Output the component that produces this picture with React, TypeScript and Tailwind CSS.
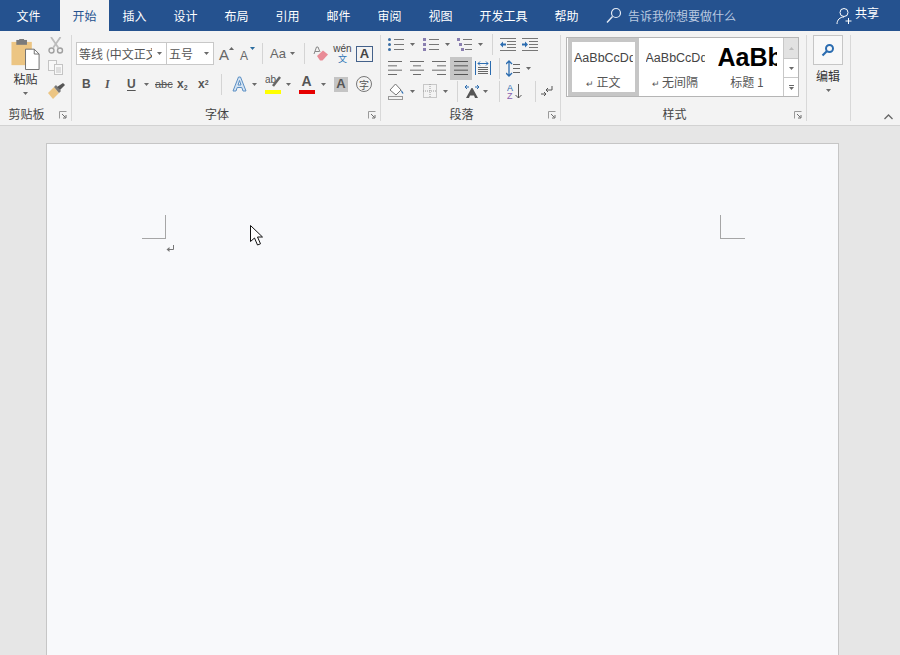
import React from "react";

const Caret = ({ className = "" }: { className?: string }) => (
  <svg width="5" height="3" viewBox="0 0 5 3" className={`shrink-0 ${className}`}><polygon points="0,0 5,0 2.5,3" fill="#6a6a6a" /></svg>
);
const Sep = ({ className = "" }: { className?: string }) => <div className={`w-px h-[21px] bg-[#d4d4d4] shrink-0 ${className}`} />;
const Launcher = () => (
  <svg width="8" height="8" viewBox="0 0 8 8" className="absolute right-[4px] top-[4px]">
    <path d="M.5 7.5V.5H7.5" fill="none" stroke="#9a9a9a" />
    <path d="M3 3 6.5 6.5M7 4v3H4" fill="none" stroke="#6d6d6d" />
  </svg>
);
const Lines = ({ w = 14, rows, color = "#6c6c6c" }: { w?: number; rows: [number, number][]; color?: string }) => (
  <svg width={w} height="14" viewBox={`0 0 ${w} 14`} className="shrink-0">
    {rows.map(([a, b], i) => <rect key={i} x={a} y={i * (13 / (rows.length - 1)) } width={b - a} height="1" fill={color} />)}
  </svg>
);
const Group = ({ w, label, launcher = true, children }: { w: string; label?: string; launcher?: boolean; children: React.ReactNode }) => (
  <div className={`${w} shrink-0 h-[94px] flex flex-col relative`}>
    <div className="flex-1 min-h-0">{children}</div>
    <div className="h-[14px] mb-[4px] relative flex justify-center items-center pr-[18px] text-[12px] leading-[14px] text-[#444]">
      {label}
      {launcher && <Launcher />}
    </div>
  </div>
);
const VLine = () => <div className="w-px h-[86px] mt-[4px] bg-[#d8d8d8] shrink-0" />;

const tabs: [string, string][] = [["插入", "w-[51px]"], ["设计", "w-[51px]"], ["布局", "w-[51px]"], ["引用", "w-[51px]"], ["邮件", "w-[51px]"], ["审阅", "w-[51px]"], ["视图", "w-[51px]"], ["开发工具", "w-[75px]"], ["帮助", "w-[51px]"]];

function ClipboardGroup() {
  return (
    <div className="flex h-full">
      <div className="w-[48px] flex flex-col items-center pl-[3px]">
        <svg width="30" height="31" viewBox="0 0 30 32" className="mt-[8px] shrink-0">
          <rect x="0" y="3" width="21" height="24" fill="#ecc583" />
          <rect x="5" y="1" width="11" height="5" fill="#7b7b7b" />
          <rect x="8" y="0" width="5" height="3" fill="#7b7b7b" />
          <path d="M14.500 10.500h9l5 5v16h-14z" fill="#fff" stroke="#6f6f6f" />
          <path d="M23.500 10.500v5h5" fill="none" stroke="#6f6f6f" />
        </svg>
        <div className="text-[12px] leading-[14px] text-[#333] mt-[2px]">粘贴</div>
        <Caret className="mt-[6px]" />
      </div>
      <div className="flex flex-col pt-[6px]">
        <svg width="16" height="17" viewBox="0 0 16 17" className="shrink-0"><circle cx="3.500" cy="13.500" r="2.500" fill="none" stroke="#a0a0a0" strokeWidth="1.400" /><circle cx="12" cy="13.500" r="2.500" fill="none" stroke="#a0a0a0" strokeWidth="1.400" /><path d="M3 0 10.500 11M12.500 0 5 11" stroke="#bcbcbc" strokeWidth="1.800" /></svg>
        <svg width="16" height="16" viewBox="0 0 16 16" className="mt-[6px] shrink-0" fill="#f8f8f8" stroke="#c4c4c4"><rect x=".5" y=".5" width="8" height="10" /><rect x="6.500" y="4.500" width="8" height="10" /><path d="M8 8h5M8 10h5M8 12h5" /></svg>
        <svg width="18" height="16" viewBox="0 0 18 16" className="mt-[7px] shrink-0"><path d="M0 10 6 4 11 10 5 16Z" fill="#ecc583" /><path d="M6 4 8 2 13 8 11 10Z" fill="#777" /><path d="M9 4 15 0 17 2 12 7Z" fill="#555" /></svg>
      </div>
    </div>
  );
}

function FontGroup() {
  return (
    <div className="pl-[4px]">
      <div className="flex items-center pt-[11px] h-[34px]">
        <div className="w-[91px] h-[23px] border border-[#c8c8c8] bg-white flex items-center pl-[2px] pr-[4px] overflow-hidden">
          <span className="text-[12px] text-[#555] whitespace-nowrap overflow-hidden w-[73px]">等线 (中文正文)</span>
          <Caret className="ml-auto" />
        </div>
        <div className="w-[47px] h-[23px] border border-l-0 border-[#c8c8c8] bg-white flex items-center pl-[2px] pr-[4px]">
          <span className="text-[12px] text-[#555]">五号</span>
          <Caret className="ml-auto" />
        </div>
        <div className="ml-[5px] flex items-start w-[15px] h-[18px] relative">
          <span className="text-[15px] leading-[20px] text-[#666] font-['Liberation_Sans',sans-serif]">A</span>
          <svg width="5" height="3" viewBox="0 0 5 3" className="absolute right-0 top-[2px]"><polygon points="0,3 5,3 2.500,0" fill="#666" /></svg>
        </div>
        <div className="ml-[6px] flex items-start w-[15px] h-[18px] relative">
          <span className="text-[12px] leading-[22px] text-[#666] font-['Liberation_Sans',sans-serif]">A</span>
          <svg width="5" height="3" viewBox="0 0 5 3" className="absolute right-0 top-[2px]"><polygon points="0,0 5,0 2.500,3" fill="#2b6c9e" /></svg>
        </div>
        <Sep className="ml-[7px]" />
        <span className="ml-[7px] text-[13px] leading-[16px] text-[#666] font-['Liberation_Sans',sans-serif] w-[17px]">Aa</span>
        <Caret className="ml-[3px]" />
        <Sep className="ml-[9px]" />
        <svg width="16" height="16" viewBox="0 0 16 16" className="ml-[8px] shrink-0"><path d="M1 8 3.500 1h1.500l2 5M2 5.500h4" fill="none" stroke="#888" /><path d="M4 10 10 4.500 15 8.500 9.500 14.500H7Z" fill="#e98b96" /></svg>
        <div className="ml-[5px] w-[17px] flex flex-col items-center leading-none">
          <span className="text-[10px] leading-[10px] text-[#444] font-['Liberation_Sans',sans-serif]">wén</span>
          <span className="text-[9px] leading-[9px] text-[#2f75b5]">文</span>
        </div>
        <div className="ml-[5px] w-[17px] h-[16px] border border-[#44618a] flex items-center justify-center text-[13px] font-bold text-[#444] leading-none font-['Liberation_Sans',sans-serif]">A</div>
      </div>
      <div className="flex items-center h-[24px] mt-[7px] text-[#555] font-['Liberation_Sans',sans-serif]">
        <span className="ml-[6px] w-[8px] text-[12px] font-bold">B</span>
        <span className="ml-[15px] w-[6px] text-[12px] font-bold italic font-['Liberation_Serif',serif]">I</span>
        <span className="ml-[16px] w-[9px] text-[12px] font-bold underline underline-offset-2">U</span>
        <Caret className="ml-[8px]" />
        <span className="ml-[6px] w-[17px] text-[11px] line-through">abc</span>
        <span className="ml-[5px] w-[13px] text-[12px] font-bold">x<sub className="text-[7px]">2</sub></span>
        <span className="ml-[8px] w-[15px] text-[12px] font-bold">x<sup className="text-[7px]">2</sup></span>
        <Sep className="ml-[8px]" />
        <span className="ml-[10px] shrink-0 w-[14px]"><svg width="15" height="16" viewBox="0 0 15 16"><path d="M1 15 6.500 1h2L14 15h-3l-1.200-3.500h-4.600L4 15ZM6 9h3L7.500 4.500Z" fill="#d5e4f3" stroke="#5b8fc4" /></svg></span>
        <Caret className="ml-[6px]" />
        <div className="ml-[7px] w-[17px] h-[20px] flex flex-col justify-between items-center shrink-0">
          <svg width="16" height="13" viewBox="0 0 16 13"><text x="0" y="9" fontSize="10" fill="#555" fontFamily="Liberation Sans">ab</text><path d="M8 12 15 3" stroke="#666" strokeWidth="2.500" /></svg>
          <div className="w-[16px] h-[4px] bg-[#ffff00]" />
        </div>
        <Caret className="ml-[5px]" />
        <div className="ml-[7px] w-[17px] h-[20px] flex flex-col justify-between items-center shrink-0">
          <span className="text-[14px] leading-[15px] font-bold text-[#555]">A</span>
          <div className="w-[16px] h-[4px] bg-[#e60000]" />
        </div>
        <Caret className="ml-[6px]" />
        <div className="ml-[8px] w-[14px] h-[15px] bg-[#c4c4c4] flex items-center justify-center text-[13px] font-bold text-[#555]">A</div>
        <div className="ml-[8px] w-[16px] h-[16px] rounded-full border border-[#777] flex items-center justify-center text-[10px] text-[#555] font-['Noto_Sans_CJK_SC',sans-serif]">字</div>
      </div>
    </div>
  );
}

const Bullets = ({ kind }: { kind: 0 | 1 | 2 }) => (
  <svg width="16" height="14" viewBox="0 0 16 14" className="shrink-0">
    {[1, 6, 11].map((y, i) => (
      <g key={y}>
        {kind === 0 && <circle cx="1.500" cy={y + 1.5} r="1.500" fill="#3a6ea5" />}
        {kind === 1 && <rect x="0" y={y} width="3" height="3" fill="#8a7fb0" />}
        {kind === 2 && <rect x={i * 2} y={y} width="3" height="3" fill="#8a7fb0" />}
        <rect x={kind === 2 ? 6 + i : 6} y={y + 1} width={kind === 2 ? 9 - i : 10} height="1" fill="#777" />
      </g>
    ))}
  </svg>
);
const Indent = ({ dir }: { dir: 0 | 1 }) => (
  <svg width="16" height="13" viewBox="0 0 16 13" className="shrink-0">
    <path d="M0 .5h16M7 3.500h9M7 6.500h9M7 9.500h9M0 12.500h16" stroke="#777" />
    {dir === 0 ? <path d="M0 6.500 3 3.500v2h3v2H3v2Z" fill="#2b6cb0" /> : <path d="M6 6.500 3 3.500v2H0v2h3v2Z" fill="#2b6cb0" />}
  </svg>
);

function ParagraphGroup() {
  return (
    <div className="pl-[7px]">
      <div className="flex items-center pt-[6px] h-[20px]">
        <Bullets kind={0} /><Caret className="ml-[6px]" />
        <div className="ml-[8px]"><Bullets kind={1} /></div><Caret className="ml-[6px]" />
        <div className="ml-[7px]"><Bullets kind={2} /></div><Caret className="ml-[5px]" />
        <Sep className="ml-[9px]" />
        <div className="ml-[7px]"><Indent dir={0} /></div>
        <div className="ml-[6px]"><Indent dir={1} /></div>
      </div>
      <div className="flex items-center h-[24px] mt-[5px]">
        <Lines rows={[[0, 14], [0, 9], [0, 14], [0, 9]]} />
        <div className="ml-[8px]"><Lines rows={[[0, 14], [3, 11], [0, 14], [3, 11]]} /></div>
        <div className="ml-[8px]"><Lines rows={[[0, 14], [5, 14], [0, 14], [5, 14]]} /></div>
        <div className="ml-[4px] w-[22px] h-[23px] bg-[#c6c6c6] flex items-center justify-center">
          <Lines rows={[[0, 14], [0, 14], [0, 14], [0, 14]]} color="#555" />
        </div>
        <svg width="16" height="16" viewBox="0 0 16 16" className="ml-[3px] shrink-0"><path d="M.5 1v14M15.500 1v14" stroke="#2b6cb0" /><path d="M3 3.500h10M5 1.500 3 3.500l2 2M11 1.500l2 2-2 2" fill="none" stroke="#2b6cb0" /><path d="M3 7.500h10M3 9.500h10M3 11.500h10M3 13.500h10" stroke="#666" /></svg>
        <Sep className="ml-[8px]" />
        <svg width="14" height="17" viewBox="0 0 14 17" className="ml-[6px] shrink-0"><path d="M3 1v15M0 4l3-3 3 3M0 13l3 3 3-3" fill="none" stroke="#2b6cb0" strokeWidth="1.300" /><path d="M7 4.500h7M7 8.500h7M7 12.500h7" stroke="#666" /></svg>
        <Caret className="ml-[6px]" />
      </div>
      <div className="flex items-center h-[22px]">
        <svg width="17" height="17" viewBox="0 0 17 17" className="shrink-0"><path d="M2 7 7.500 1 13 7 8 12Z" fill="#fff" stroke="#777" /><path d="M13 7c2 2 3 3 2 4-1-1-2-2-2-4Z" fill="#2b6cb0" /><rect x=".5" y="13.500" width="14" height="3" fill="#f3f3f3" stroke="#999" /></svg>
        <Caret className="ml-[5px]" />
        <svg width="14" height="14" viewBox="0 0 14 14" className="ml-[8px] shrink-0" fill="none" stroke="#9a9a9a" strokeDasharray="1 1"><rect x=".5" y=".5" width="13" height="13" /><path d="M7 0v14M0 7h14" /></svg>
        <Caret className="ml-[6px]" />
        <Sep className="ml-[9px]" />
        <svg width="16" height="14" viewBox="0 0 16 14" className="ml-[6px] shrink-0"><path d="M2 14 7.500 4h1L14 14h-3l-1-2.500H6L5 14Z" fill="#555" /><path d="M1 3h4M3 1 1 3l2 2M11 3h4M13 1l2 2-2 2" fill="none" stroke="#2b6cb0" /></svg>
        <Caret className="ml-[3px]" />
        <Sep className="ml-[11px]" />
        <svg width="16" height="17" viewBox="0 0 16 17" className="ml-[7px] shrink-0"><text x="0" y="8" fontSize="9" fill="#2b6cb0" fontFamily="Liberation Sans">A</text><text x="0" y="16" fontSize="9" fill="#8a5fb0" fontFamily="Liberation Sans">Z</text><path d="M11.500 1v14M8.500 12l3 3 3-3" fill="none" stroke="#555" /></svg>
        <Sep className="ml-[12px]" />
        <svg width="13" height="13" viewBox="0 0 13 13" className="ml-[4px] shrink-0"><path d="M12 1v4H6M8 3 6 5l2 2" fill="none" stroke="#555" /><path d="M1 9h5M4 7l2 2-2 2" fill="none" stroke="#555" /></svg>
      </div>
    </div>
  );
}

const StyleItem = ({ text, label, mark, big, selected }: { text: string; label: string; mark?: boolean; big?: boolean; selected?: boolean }) => (
  <div className={`h-full flex flex-col items-center bg-white shrink-0 overflow-hidden ${selected ? "w-[71px] border-[4px] border-[#c6c6c6]" : "w-[72px] pt-[4px]"}`}>
    <div className={`h-[32px] flex items-center w-[59px] overflow-hidden ${big ? "text-[25px] font-bold text-black" : "text-[12.500px] text-[#444]"} font-['Liberation_Sans',sans-serif] whitespace-nowrap`}>
      <span className="w-[59px] overflow-hidden">{text}</span>
    </div>
    <div className="text-[12px] leading-[14px] text-[#555] mt-[1px] whitespace-nowrap">{mark && <span className="text-[9px] mr-[2px]">↵</span>}{label}</div>
  </div>
);

function StylesGroup() {
  return (
    <div className="pl-[5px] pt-[6px]">
      <div className="w-[233px] h-[60px] border border-[#b5b5b5] flex bg-white">
        <div className="flex flex-1 min-w-0 pl-[1px] overflow-hidden">
          <StyleItem text="AaBbCcDd" label="正文" mark selected />
          <StyleItem text="AaBbCcDd" label="无间隔" mark />
          <StyleItem text="AaBb" label="标题 1" big />
        </div>
        <div className="w-[15px] flex flex-col border-l border-[#c8c8c8] shrink-0">
          <div className="h-[20px] bg-[#e2e2e2] flex items-center justify-center"><svg width="5" height="3" viewBox="0 0 5 3"><polygon points="0,3 5,3 2.500,0" fill="#bbb" /></svg></div>
          <div className="h-[19px] border-t border-[#c8c8c8] flex items-center justify-center"><Caret /></div>
          <div className="flex-1 border-t border-[#c8c8c8] flex flex-col items-center justify-center gap-[1px]"><div className="w-[5px] h-px bg-[#666]" /><Caret /></div>
        </div>
      </div>
    </div>
  );
}

function EditGroup() {
  return (
    <div className="flex flex-col items-center h-full pt-[4px] pr-[1px]">
      <div className="w-[30px] h-[30px] border border-[#c6c6c6] bg-[#f8f8f8] flex items-center justify-center">
        <svg width="14" height="14" viewBox="0 0 14 14"><circle cx="8.500" cy="5.500" r="3.500" fill="none" stroke="#2b6cb0" strokeWidth="2" /><path d="M6 8 1.500 12.500" stroke="#2b6cb0" strokeWidth="2.200" /></svg>
      </div>
      <div className="text-[12px] leading-[14px] text-[#333] mt-[4px]">编辑</div>
      <Caret className="mt-[6px]" />
    </div>
  );
}

export default function App() {
  return (
    <div className="w-[900px] h-[655px] overflow-hidden bg-[#e6e6e6] relative font-['Noto_Sans_CJK_SC','Liberation_Sans',sans-serif] flex flex-col">
      <div className="h-[31px] bg-[#25528f] flex items-stretch shrink-0 text-[12px] text-white">
        <div className="w-[57px] flex items-center justify-center">文件</div>
        <div className="w-[3px]" />
        <div className="w-[49px] bg-[#f3f3f3] text-[#25528f] flex items-center justify-center">开始</div>
        {tabs.map(([t, w]) => <div key={t} className={`${w} flex items-center justify-center shrink-0`}>{t}</div>)}
        <div className="flex items-center ml-[14px] text-[#b9c9e0]">
          <svg width="16" height="17" viewBox="0 0 16 17" className="shrink-0"><circle cx="10" cy="6" r="4.500" fill="none" stroke="#e4ebf5" strokeWidth="1.200" /><path d="M6.500 9.500 1 15.500" stroke="#e4ebf5" strokeWidth="1.400" /></svg>
          <span className="ml-[6px] whitespace-nowrap">告诉我你想要做什么</span>
        </div>
        <div className="flex items-center ml-auto pr-[21px] pb-[5px]">
          <svg width="17" height="18" viewBox="0 0 17 18" className="shrink-0 mt-[5px]"><circle cx="8" cy="5.500" r="4" fill="none" stroke="#fff" /><path d="M1 17c0-4 3-7 7-7M9.500 14h6M12.500 11v6" fill="none" stroke="#fff" /></svg>
          <span className="ml-[2px]">共享</span>
        </div>
      </div>
      <div className="h-[95px] bg-[#f3f3f3] border-b border-[#d2d2d2] flex shrink-0 text-[#444]">
        <Group w="w-[71px]" label="剪贴板"><ClipboardGroup /></Group>
        <VLine />
        <Group w="w-[308px]" label="字体"><FontGroup /></Group>
        <VLine />
        <Group w="w-[179px]" label="段落"><ParagraphGroup /></Group>
        <VLine />
        <Group w="w-[245px]" label="样式"><StylesGroup /></Group>
        <VLine />
        <Group w="w-[43px]" launcher={false}><EditGroup /></Group>
        <VLine />
        <div className="flex-1 flex items-end justify-end pr-[7px] pb-[5px]">
          <svg width="9" height="6" viewBox="0 0 9 6"><path d="M.5 5 4.500 1l4 4" fill="none" stroke="#666" strokeWidth="1.300" /></svg>
        </div>
      </div>
      <div className="flex-1 min-h-0 pt-[17px] pl-[46px]">
        <div className="w-[793px] h-[600px] bg-[#f8f9fb] border border-[#c6c6c6] pt-[71px] pl-[95px] pr-[93px]">
          <div className="flex justify-between">
            <div className="w-[24px] h-[24px] border-r border-b border-[#a6a6a6]" />
            <div className="w-[25px] h-[24px] border-l border-b border-[#a6a6a6]" />
          </div>
          <div className="pl-[24px] mt-[6px]">
            <svg width="9" height="8" viewBox="0 0 9 8"><path d="M7.500 0v4.500H2" fill="none" stroke="#777" /><path d="M3.500 2 .5 4.500 3.500 7Z" fill="#777" /></svg>
          </div>
        </div>
      </div>
      <svg width="13" height="21" viewBox="0 0 13 21" className="absolute left-[250px] top-[225px]">
        <path d="M.5.500v16l4-3.500 3 7 3-1.200-3-6.800h5Z" fill="#fff" stroke="#111" />
      </svg>
    </div>
  );
}
